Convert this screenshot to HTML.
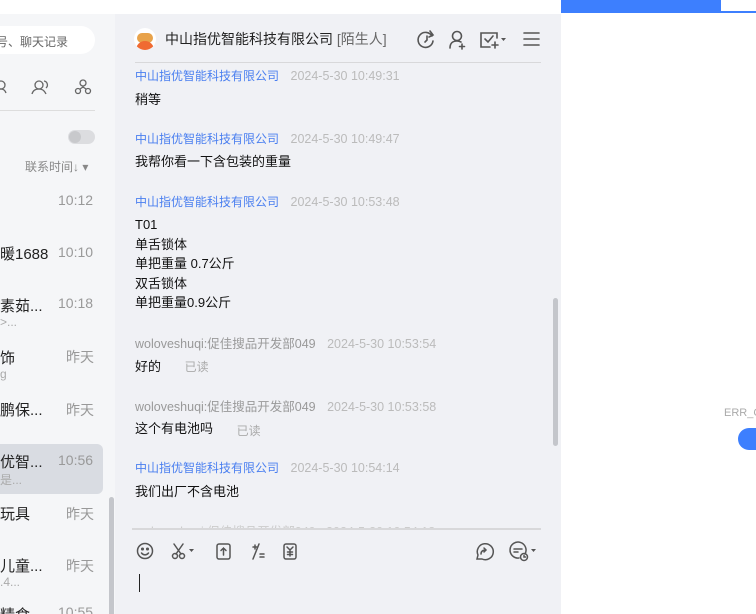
<!DOCTYPE html>
<html><head><meta charset="utf-8"><style>
*{margin:0;padding:0;box-sizing:border-box}
html,body{width:756px;height:614px;overflow:hidden}
body{background:#fff;font-family:"Liberation Sans","Noto Sans CJK SC",sans-serif;position:relative}
.abs{position:absolute}
#left{left:0;top:14px;width:115px;height:600px;background:#f5f6f8;overflow:hidden}
#chat{left:115px;top:14px;width:446px;height:600px;background:#f0f1f5;overflow:hidden}
.t{position:absolute;white-space:nowrap}
.name{font-size:15px;color:#222}
.time{font-size:14px;color:#999}
.sub{font-size:12px;color:#aaa}
.blue{color:#4a7ff0;font-size:12px}
.ts{color:#bbb;font-size:12.5px;margin-left:8px}
.msg{font-size:13px;color:#111;line-height:19.5px}
.gray{color:#999;font-size:12.5px}
.read{color:#aaa;font-size:12px}
</style></head><body>
<div class="abs" style="left:0;top:0;width:561px;height:14px;background:#fff"></div>
<div class="abs" style="left:561px;top:0;width:160px;height:13px;background:#3d7ffe"></div>
<div class="abs" style="left:721px;top:11px;width:35px;height:2px;background:#3d7ffe"></div>
<div class="t" style="left:724px;top:407px;font-size:11px;color:#aaa">ERR_C</div>
<div class="abs" style="left:738px;top:428px;width:30px;height:22px;border-radius:11px;background:#3d7ffe"></div>

<div id="left" class="abs">
 <div class="abs" style="left:-20px;top:12px;width:115px;height:28px;border-radius:14px;background:#fff"></div>
 <div class="t" style="left:-4px;top:19px;font-size:12px;color:#666">号、聊天记录</div>
 <svg class="abs" style="left:0;top:64px" width="100" height="20" fill="none" stroke="#666" stroke-width="1.3">
  <circle cx="1" cy="7" r="4"/><path d="M-5 16c1-4 4-5 6-5s4 1 5 4"/>
  <circle cx="39" cy="7" r="4"/><path d="M32 16c1-4 4-5 7-5s5 1 7 5"/><path d="M44 3a4 4 0 0 1 2 7"/>
  <circle cx="83" cy="5" r="3"/><circle cx="78" cy="13" r="2.5"/><circle cx="88" cy="13" r="2.5"/><path d="M83 8v2M80 11l3-2 3 2"/>
 </svg>
 <div class="abs" style="left:0;top:96px;width:95px;height:1px;background:#ddd"></div>
 <div class="abs" style="left:68px;top:116px;width:27px;height:14px;border-radius:7px;background:#dcdde0"></div>
 <div class="abs" style="left:69px;top:117px;width:12px;height:12px;border-radius:6px;background:#c8c9cc"></div>
 <div class="t" style="left:25px;top:144px;font-size:12px;color:#888">联系时间↓ ▾</div>
 <div class="t time" style="left:58px;top:178px">10:12</div>
 <div class="t name" style="left:0;top:229px">暖1688</div><div class="t time" style="left:58px;top:230px">10:10</div>
 <div class="t name" style="left:0;top:281px">素茹...</div><div class="t time" style="left:58px;top:281px">10:18</div>
 <div class="t sub" style="left:0;top:301px">&gt;...</div>
 <div class="t name" style="left:0;top:333px">饰</div><div class="t time" style="left:66px;top:333px">昨天</div>
 <div class="t sub" style="left:0;top:353px">g</div>
 <div class="t name" style="left:0;top:385px">鹏保...</div><div class="t time" style="left:66px;top:386px">昨天</div>
 <div class="abs" style="left:-10px;top:430px;width:113px;height:50px;border-radius:6px;background:#d9dce2"></div>
 <div class="t name" style="left:0;top:437px">优智...</div><div class="t time" style="left:58px;top:438px">10:56</div>
 <div class="t sub" style="left:0;top:457px">是...</div>
 <div class="t name" style="left:0;top:489px">玩具</div><div class="t time" style="left:66px;top:490px">昨天</div>
 <div class="t name" style="left:0;top:541px">儿童...</div><div class="t time" style="left:66px;top:542px">昨天</div>
 <div class="t sub" style="left:0;top:561px">.4...</div>
 <div class="t name" style="left:0;top:590px">精食...</div><div class="t time" style="left:58px;top:590px">10:55</div>
 <div class="abs" style="left:109px;top:483px;width:5px;height:120px;border-radius:3px;background:#c4c6cb"></div>
</div>

<div id="chat" class="abs">
 <div class="abs" style="left:19px;top:14px;width:22px;height:22px;border-radius:11px;background:#fff;overflow:hidden">
  <div class="abs" style="left:3px;top:5px;width:16px;height:10px;border-radius:5px;background:#e8a24a"></div>
  <div class="abs" style="left:2px;top:13px;width:18px;height:10px;border-radius:9px 9px 0 0;background:#f06a32"></div>
 </div>
 <div class="t" style="left:50px;top:15px;font-size:14px;color:#222">中山指优智能科技有限公司 <span style="color:#666">[陌生人]</span></div>
 <svg class="abs" style="left:300px;top:14px" width="130" height="22" fill="none" stroke="#555" stroke-width="1.6" stroke-linecap="round">
  <path d="M17 8a7.5 7.5 0 1 0 1 5"/><path d="M15 3l3 4-4 2"/><path d="M12 8v4l-2 2"/>
  <circle cx="42" cy="8" r="4.5"/><path d="M35 20c0-5 3-7 7-7 2 0 3 0.5 4 1"/><path d="M47 16v5M44.5 18.5h5"/>
  <path d="M82 10V5H66v14h9"/><path d="M70 11l3 3 5-6"/><path d="M80 14v6M77 17h6"/>
  <path d="M86 10l2.5 3 2.5-3z" fill="#555" stroke="none"/>
  <path d="M109 5h15M109 11h15M109 17h15"/>
 </svg>
 <div class="abs" style="left:20px;top:48px;width:406px;height:1px;background:#d8d8da"></div>

 <div class="t blue" style="left:20px;top:53px">中山指优智能科技有限公司<span class="ts">&nbsp;2024-5-30 10:49:31</span></div>
 <div class="t msg" style="left:20px;top:76px">稍等</div>
 <div class="t blue" style="left:20px;top:116px">中山指优智能科技有限公司<span class="ts">&nbsp;2024-5-30 10:49:47</span></div>
 <div class="t msg" style="left:20px;top:138px">我帮你看一下含包装的重量</div>
 <div class="t blue" style="left:20px;top:179px">中山指优智能科技有限公司<span class="ts">&nbsp;2024-5-30 10:53:48</span></div>
 <div class="t msg" style="left:20px;top:201px">T01<br>单舌锁体<br>单把重量 0.7公斤<br>双舌锁体<br>单把重量0.9公斤</div>
 <div class="t gray" style="left:20px;top:319px">woloveshuqi:促佳搜品开发部049<span class="ts">&nbsp;2024-5-30 10:53:54</span></div>
 <div class="t msg" style="left:20px;top:343px">好的 <span class="read" style="margin-left:20px">已读</span></div>
 <div class="t gray" style="left:20px;top:382px">woloveshuqi:促佳搜品开发部049<span class="ts">&nbsp;2024-5-30 10:53:58</span></div>
 <div class="t msg" style="left:20px;top:405px">这个有电池吗 <span class="read" style="margin-left:20px;position:relative;top:2px">已读</span></div>
 <div class="t blue" style="left:20px;top:445px">中山指优智能科技有限公司<span class="ts">&nbsp;2024-5-30 10:54:14</span></div>
 <div class="t msg" style="left:20px;top:468px">我们出厂不含电池</div>
 <div class="t" style="left:20px;top:507px;font-size:12.5px;color:#ccc;height:7px;overflow:hidden">woloveshuqi:促佳搜品开发部049 &nbsp;&nbsp;2024-5-30 10:54:18</div>
 <div class="abs" style="left:438px;top:284px;width:5px;height:148px;border-radius:3px;background:#c4c6cb"></div>
 <div class="abs" style="left:17px;top:514px;width:409px;height:2px;background:#d8d8da"></div>

 <svg class="abs" style="left:20px;top:526px" width="410" height="22" fill="none" stroke="#555" stroke-width="1.5" stroke-linecap="round">
  <circle cx="10" cy="11" r="7.5"/><circle cx="7.5" cy="9" r=".8" fill="#555"/><circle cx="12.5" cy="9" r=".8" fill="#555"/><path d="M6.5 13c2 2.5 5 2.5 7 0"/>
  <circle cx="40" cy="16" r="2.5"/><circle cx="47" cy="16" r="2.5"/><path d="M41 14l7-10M46 14l-7-10"/>
  <path d="M54 9l2.5 3 2.5-3z" fill="#555" stroke="none"/>
  <rect x="82" y="4" width="13" height="15" rx="2"/><path d="M88.5 15V8M86 10.5l2.5-2.5 2.5 2.5"/>
  <path d="M124 4l-6 15M118 7h4M120 5v4M125 14h4M125 17h4"/>
  <rect x="149" y="4" width="12" height="15" rx="2"/><path d="M152 7l3 3 3-3M155 10v6M152.5 12h5M152.5 14.5h5"/>
  <path d="M347 19a8 8 0 1 0-4-4l-1 4z"/><path d="M346 14c0-3 2-4 5-4M349 8l2 2-2 2"/>
  <path d="M384 18a8 8 0 1 1 6-4"/><path d="M379 9h8M379 12h4"/><circle cx="389" cy="17" r="3.5"/><path d="M389 15.5v1.5h1.5"/>
  <path d="M396 9l2.5 3 2.5-3z" fill="#555" stroke="none"/>
 </svg>
 <div class="abs" style="left:24px;top:560px;width:1px;height:18px;background:#222"></div>
</div>
</body></html>
